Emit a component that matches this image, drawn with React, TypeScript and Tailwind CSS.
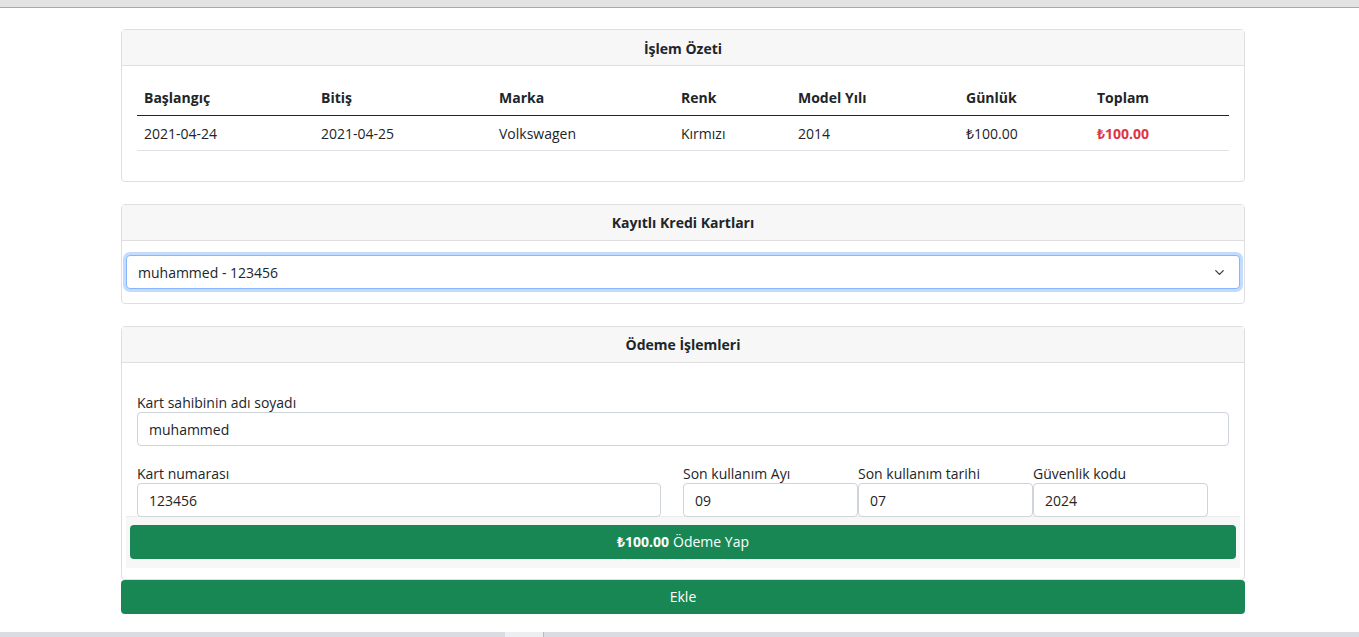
import { ChevronDown } from "lucide-react";

const rows = [
  { label: "Başlangıç", value: "2021-04-24", w: "w-[177px]" },
  { label: "Bitiş", value: "2021-04-25", w: "w-[178px]" },
  { label: "Marka", value: "Volkswagen", w: "w-[182px]" },
  { label: "Renk", value: "Kırmızı", w: "w-[117px]" },
  { label: "Model Yılı", value: "2014", w: "w-[168px]" },
  { label: "Günlük", value: "₺100.00", w: "w-[131px]" },
];

function CardHeader({ title }: { title: string }) {
  return (
    <div className="flex h-[36px] items-center justify-center border-b border-[#dfdfdf] bg-[#f7f7f7] pt-[1px] font-bold">
      {title}
    </div>
  );
}

function Field({ label, value, className }: { label: string; value: string; className?: string }) {
  return (
    <div className={className}>
      <div className="h-[21px] pt-[1px] leading-[21px]">{label}</div>
      <div className="flex h-[34px] items-center rounded-[4px] border border-[#ced4da] bg-white px-[11px] pt-[1px]">
        {value}
      </div>
    </div>
  );
}

export default function App() {
  return (
    <div
      className="flex h-[637px] flex-col overflow-hidden bg-white text-[14px] leading-[1.5] text-[#212529]"
      style={{ fontFamily: "'Open Sans', 'Noto Sans', 'DejaVu Sans', sans-serif" }}
    >
      {/* top strip of the browser */}
      <div className="h-[8px] shrink-0 border-b border-[#a8a8a8] bg-[#e3e3e3]" />

      <div className="ml-[121px] mt-[21px] flex w-[1124px] flex-col gap-[22px]">
        {/* İşlem Özeti */}
        <div className="rounded-[4px] border border-[#dfdfdf]">
          <CardHeader title="İşlem Özeti" />
          <div className="px-[15px] pb-[30px] pt-[14px]">
            <table className="w-full table-fixed border-collapse text-left">
              <thead>
                <tr className="border-b border-[#212529]">
                  {rows.map((r) => (
                    <th key={r.label} className={`${r.w} h-[35px] px-[7px] pt-[1px] font-bold`}>
                      {r.label}
                    </th>
                  ))}
                  <th className="h-[35px] px-[7px] pt-[1px] font-bold">Toplam</th>
                </tr>
              </thead>
              <tbody>
                <tr className="border-b border-[#dee2e6]">
                  {rows.map((r) => (
                    <td key={r.label} className="h-[35px] px-[7px] pt-[2px]">
                      {r.value}
                    </td>
                  ))}
                  <td className="h-[35px] px-[7px] pt-[2px] font-bold text-[#dc3545]">₺100.00</td>
                </tr>
              </tbody>
            </table>
          </div>
        </div>

        {/* Kayıtlı Kredi Kartları */}
        <div className="rounded-[4px] border border-[#dfdfdf]">
          <CardHeader title="Kayıtlı Kredi Kartları" />
          <div className="px-[4px] py-[14px]">
            <div className="flex h-[34px] items-center justify-between rounded-[4px] border border-[#86b7fe] bg-white pl-[11px] pr-[12px] pt-[1px] shadow-[0_0_0_3px_rgba(13,110,253,0.25)]">
              <span>muhammed - 123456</span>
              <ChevronDown className="size-[15px] text-[#343a40]" strokeWidth={2} />
            </div>
          </div>
        </div>

        {/* Ödeme İşlemleri */}
        <div>
          <div className="rounded-[4px] border border-[#dfdfdf]">
            <CardHeader title="Ödeme İşlemleri" />
            <div className="px-[4px] pb-[11px] pt-[28px]">
              <div className="px-[11px]">
                <Field label="Kart sahibinin adı soyadı" value="muhammed" className="w-[1092px]" />
                <div className="mt-[16px] flex">
                  <Field label="Kart numarası" value="123456" className="w-[524px]" />
                  <Field label="Son kullanım Ayı" value="09" className="ml-[22px] w-[175px]" />
                  <Field label="Son kullanım tarihi" value="07" className="w-[175px]" />
                  <Field label="Güvenlik kodu" value="2024" className="w-[175px]" />
                </div>
              </div>
              <div className="-mt-px border-t border-[#ececec] bg-[#f7f7f7] px-[4px] pb-[9px] pt-[8px]">
                <button className="flex h-[34px] w-full items-center justify-center rounded-[4px] bg-[#198754] text-white">
                  <span className="font-bold">₺100.00</span>
                  <span className="ml-[4px]">Ödeme Yap</span>
                </button>
              </div>
            </div>
          </div>
          <button className="flex h-[34px] w-full items-center justify-center rounded-[4px] bg-[#198754] text-white">
            Ekle
          </button>
        </div>
      </div>

      {/* bottom strip of the browser */}
      <div className="mt-auto flex h-[5px] shrink-0 bg-[#dadce3]">
        <div className="w-[505px]" />
        <div className="w-[38px] bg-[#eceef2]" />
        <div className="w-[1px] bg-[#b9bbc2]" />
      </div>
    </div>
  );
}
